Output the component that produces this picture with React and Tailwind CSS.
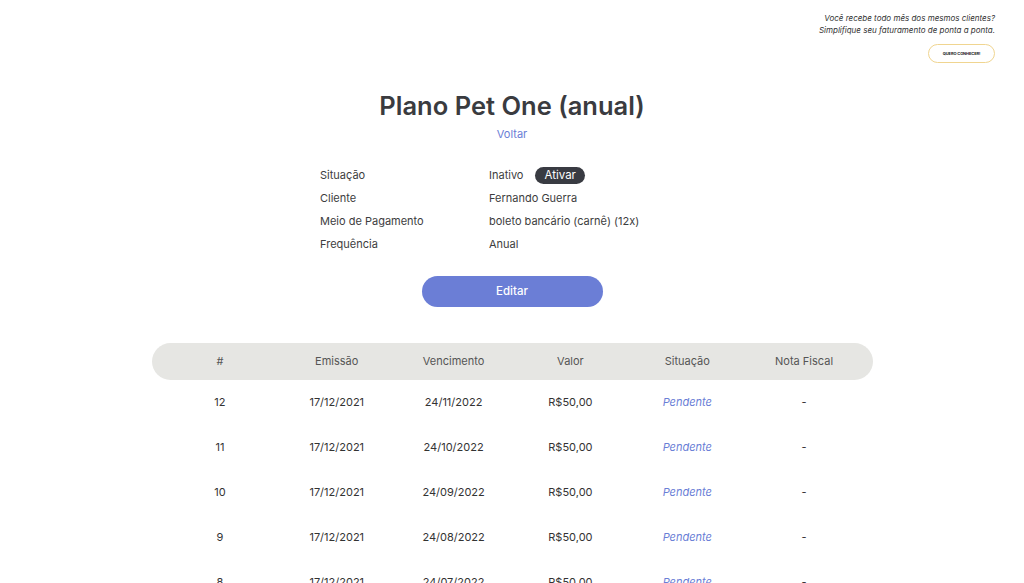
import React from 'react';

const details = [
  { label: 'Situação', value: 'Inativo', action: 'Ativar' },
  { label: 'Cliente', value: 'Fernando Guerra' },
  { label: 'Meio de Pagamento', value: 'boleto bancário (carnê) (12x)' },
  { label: 'Frequência', value: 'Anual' },
];

const invoices = [
  { n: 12, emissao: '17/12/2021', venc: '24/11/2022' },
  { n: 11, emissao: '17/12/2021', venc: '24/10/2022' },
  { n: 10, emissao: '17/12/2021', venc: '24/09/2022' },
  { n: 9, emissao: '17/12/2021', venc: '24/08/2022' },
  { n: 8, emissao: '17/12/2021', venc: '24/07/2022' },
];

const cols = ['#', 'Emissão', 'Vencimento', 'Valor', 'Situação', 'Nota Fiscal'];

export default function App() {
  return (
    <div className="h-[583px] overflow-hidden bg-white text-[#3d3d40]" style={{ fontFamily: 'Inter, "Noto Sans", sans-serif' }}>
      {/* promo banner */}
      <div className="flex flex-col items-end pr-[29px] pt-[12px]">
        <p className="text-right text-[8px] italic leading-[12px] text-[#333]">
          Você recebe todo mês dos mesmos clientes?
          <br />
          Simplifique seu faturamento de ponta a ponta.
        </p>
        <button className="mt-[8px] h-[19px] w-[67px] rounded-full border border-[#f0d590] text-[4px] font-bold tracking-tight text-[#222]">
          QUERO CONHECER!
        </button>
      </div>

      <div className="flex flex-col items-center">
        <h1 className="mt-[27px] text-[25.5px] font-semibold leading-[32px] text-[#3a3b3f]">Plano Pet One (anual)</h1>
        <a className="mt-[4px] text-[11px] text-[#6a7ed6]">Voltar</a>

        <div className="mt-[25px] flex w-[384px] flex-col gap-[7px] pr-[8px]">
          {details.map((d) => (
            <div key={d.label} className="flex h-[16px] items-center text-[11px]">
              <span className="w-[169px]">{d.label}</span>
              <span>{d.value}</span>
              {d.action && (
                <span className="ml-[12px] rounded-full bg-[#393b42] px-[9px] py-[1px] text-[11.5px] leading-[15px] text-white">{d.action}</span>
              )}
            </div>
          ))}
        </div>

        <button className="mt-[23px] h-[31px] w-[181px] rounded-full bg-[#6b7ed6] pt-[2px] text-[11.5px] font-medium text-white">Editar</button>
      </div>

      <div className="mx-auto mt-[36px] w-[721px]">
        <div className="grid h-[37px] grid-cols-6 items-center rounded-full bg-[#e6e6e3] px-[10px] text-[11px] text-[#555]">
          {cols.map((c) => (
            <span key={c} className="text-center">{c}</span>
          ))}
        </div>
        {invoices.map((r) => (
          <div key={r.n} className="grid h-[45px] grid-cols-6 items-center px-[10px] text-[11px] text-[#333]">
            <span className="text-center">{r.n}</span>
            <span className="text-center">{r.emissao}</span>
            <span className="text-center">{r.venc}</span>
            <span className="text-center">R$50,00</span>
            <span className="text-center italic text-[#6a7ed6]">Pendente</span>
            <span className="text-center">-</span>
          </div>
        ))}
      </div>
    </div>
  );
}
